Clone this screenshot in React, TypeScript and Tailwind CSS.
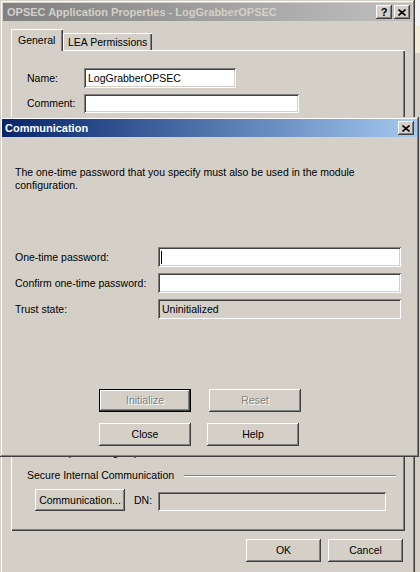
import React from "react";

const raised =
  "shadow-[inset_-1px_-1px_#404040,inset_1px_1px_#ffffff,inset_-2px_-2px_#808080,inset_2px_2px_#d4d0c8]";
const frame =
  "shadow-[inset_-1px_-1px_#404040,inset_1px_1px_#d4d0c8,inset_-2px_-2px_#808080,inset_2px_2px_#ffffff]";
const sunkenWhite =
  "bg-white shadow-[inset_1px_1px_#808080,inset_-1px_-1px_#ffffff,inset_2px_2px_#404040,inset_-2px_-2px_#d4d0c8]";
const sunkenGray =
  "bg-[#d4d0c8] shadow-[inset_1px_1px_#808080,inset_-1px_-1px_#ffffff,inset_2px_2px_#404040,inset_-2px_-2px_#d4d0c8]";

function XGlyph() {
  return (
    <svg width="8" height="7" viewBox="0 0 8 7">
      <path d="M0.5 0.5 L7.5 6.5 M7.5 0.5 L0.5 6.5" stroke="#000" strokeWidth="1.6" />
    </svg>
  );
}

function CapButton({ children }: { children: React.ReactNode }) {
  return (
    <div
      className={`w-[16px] h-[14px] bg-[#d4d0c8] ${raised} flex items-center justify-center`}
    >
      {children}
    </div>
  );
}

function Btn({
  label,
  w,
  h = 23,
  disabled = false,
  isDefault = false,
}: {
  label: string;
  w: string;
  h?: number;
  disabled?: boolean;
  isDefault?: boolean;
}) {
  const inner = (
    <div
      className={`h-full w-full bg-[#d4d0c8] ${raised} flex items-center justify-center ${
        disabled ? "text-[#808080] [text-shadow:1px_1px_0_#ffffff]" : "text-black"
      }`}
    >
      {label}
    </div>
  );
  return (
    <div
      className={`${w} ${h === 23 ? "h-[23px]" : "h-[22px]"} ${
        isDefault ? "border border-black" : ""
      }`}
    >
      {inner}
    </div>
  );
}

export default function App() {
  return (
    <div className="w-[420px] h-[572px] overflow-hidden bg-[#d4d0c8] font-['Liberation_Sans',Arial,sans-serif] text-[10.5px] leading-[13px] text-black relative flex flex-row items-start">
      {/* Back window */}
      <div className={`w-[415px] h-[590px] shrink-0 bg-[#d4d0c8] ${frame} pt-[3px] px-[3px] flex flex-col`}>
        {/* inactive title bar */}
        <div className="h-[18px] bg-gradient-to-r from-[#808080] to-[#c0c0c0] flex items-center pl-[4px] pr-[2px]">
          <span className="font-bold text-[11px] text-[#d4d0c8] whitespace-nowrap">
            OPSEC Application Properties - LogGrabberOPSEC
          </span>
          <div className="ml-auto flex gap-[2px]">
            <CapButton>
              <span className="font-bold text-[11px] leading-none">?</span>
            </CapButton>
            <CapButton>
              <XGlyph />
            </CapButton>
          </div>
        </div>

        {/* tabs */}
        <div className="ml-[8px] mt-[8px] w-[394px] flex flex-col">
          <div className="h-[21px] flex items-end">
            <div className="relative z-10 w-[52px] h-[22px] -mb-[1px] bg-[#d4d0c8] shadow-[inset_1px_1px_#ffffff,inset_-1px_0_#404040,inset_-2px_0_#808080] pl-[7px] pt-[5px] whitespace-nowrap">
              General
            </div>
            <div className="w-[89px] h-[17px] bg-[#d4d0c8] shadow-[inset_1px_1px_#ffffff,inset_-1px_0_#404040,inset_-2px_0_#808080] pl-[5px] pt-[3px] whitespace-nowrap">
              LEA Permissions
            </div>
          </div>

          {/* panel */}
          <div className="h-[481px] bg-[#d4d0c8] shadow-[inset_1px_1px_#ffffff,inset_-1px_-1px_#404040,inset_-2px_-2px_#808080] flex flex-col pl-[16px]">
            <div className="mt-[18px] flex items-center h-[20px]">
              <span className="w-[57px]">Name:</span>
              <div className={`w-[152px] h-[20px] ${sunkenWhite} flex items-center pl-[4px]`}>
                LogGrabberOPSEC
              </div>
            </div>
            <div className="mt-[6px] flex items-center h-[19px]">
              <span className="w-[57px]">Comment:</span>
              <div className={`w-[215px] h-[19px] ${sunkenWhite}`} />
            </div>

            <div className="mt-[333px] pl-[12px] flex whitespace-nowrap h-[13px]">
              <span className="w-[62px]">Description:</span>
              <span>Log Export API</span>
            </div>

            <div className="mt-[10px] flex items-center h-[13px] pr-[9px]">
              <span className="whitespace-nowrap">Secure Internal Communication</span>
              <div className="ml-[10px] flex-1 h-[2px] border-t border-t-[#808080] border-b border-b-white" />
            </div>

            <div className="mt-[7px] pl-[8px] flex items-center">
              <Btn label="Communication..." w="w-[90px]" h={22} />
              <span className="ml-[9px] w-[24px]">DN:</span>
              <div className={`w-[228px] h-[19px] ${sunkenGray} self-end`} />
            </div>
          </div>

          {/* OK / Cancel */}
          <div className="mt-[8px] flex justify-end gap-[7px] pr-[2px]">
            <Btn label="OK" w="w-[75px]" />
            <Btn label="Cancel" w="w-[75px]" />
          </div>
        </div>
      </div>

      {/* strip outside window */}
      <div className="w-[5px] h-[572px] flex flex-col">
        <div className="h-[26px] bg-[#f4f4f4]" />
        <div className="h-[27px] bg-[#f1ebd7]" />
        <div className="flex-1 bg-[#d4d0c8]" />
      </div>

      {/* Communication dialog (overlay) */}
      <div className={`absolute left-0 top-[117px] w-[419px] h-[340px] bg-[#d4d0c8] ${frame} p-[2px] flex flex-col`}>
        <div className="h-[18px] bg-gradient-to-r from-[#0a246a] to-[#a6caf0] flex items-center pl-[3px] pr-[3px]">
          <span className="font-bold text-[11px] text-white whitespace-nowrap">Communication</span>
          <div className="ml-auto">
            <CapButton>
              <XGlyph />
            </CapButton>
          </div>
        </div>

        <div className="pl-[13px] mt-[29px] whitespace-nowrap">
          The one-time password that you specify must also be used in the module
          <br />
          configuration.
        </div>

        <div className="mt-[55px] flex flex-col gap-[6px] pl-[13px]">
          <div className="flex items-center h-[20px]">
            <span className="w-[143px]">One-time password:</span>
            <div className={`w-[243px] h-[20px] ${sunkenWhite} flex items-center pl-[3px]`}>
              <div className="w-[1px] h-[13px] bg-black" />
            </div>
          </div>
          <div className="flex items-center h-[20px]">
            <span className="w-[143px] whitespace-nowrap">Confirm one-time password:</span>
            <div className={`w-[243px] h-[20px] ${sunkenWhite}`} />
          </div>
          <div className="flex items-center h-[20px]">
            <span className="w-[143px]">Trust state:</span>
            <div className={`w-[243px] h-[20px] ${sunkenGray} flex items-center pl-[4px]`}>
              Uninitialized
            </div>
          </div>
        </div>

        <div className="mt-[70px] pl-[97px] flex gap-[18px]">
          <Btn label="Initialize" w="w-[92px]" disabled isDefault />
          <Btn label="Reset" w="w-[92px]" disabled />
        </div>
        <div className="mt-[11px] pl-[97px] flex gap-[16px]">
          <Btn label="Close" w="w-[92px]" />
          <Btn label="Help" w="w-[92px]" />
        </div>
      </div>
    </div>
  );
}
